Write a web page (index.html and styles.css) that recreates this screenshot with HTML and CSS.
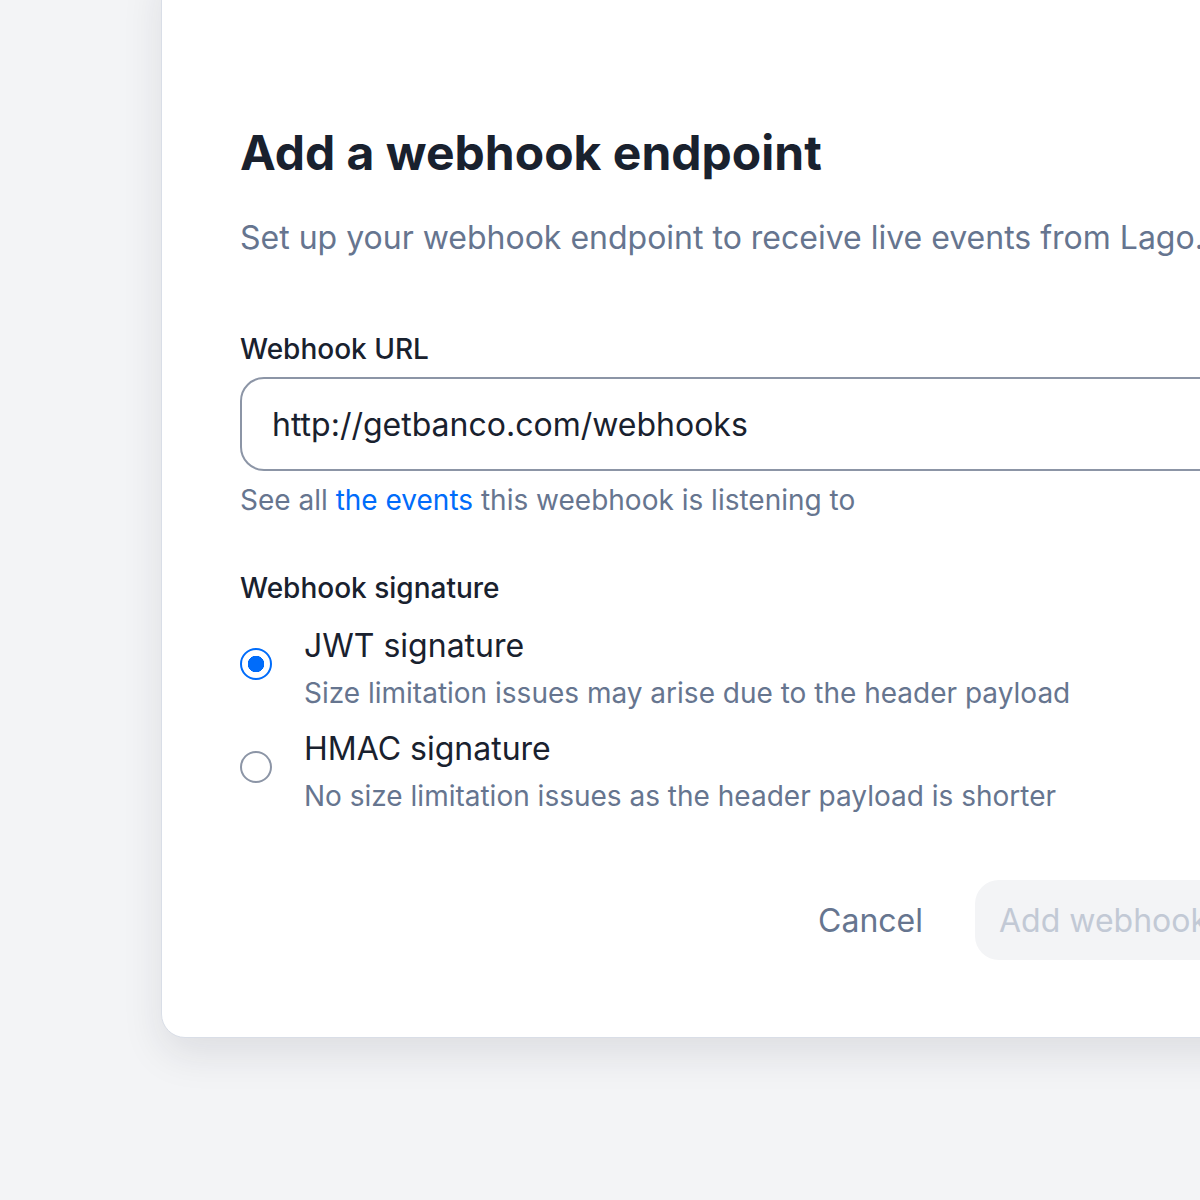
FILE: index.html
```html
<!DOCTYPE html>
<html>
  <head>
    <meta charset="utf-8" />
    <title>Add a webhook endpoint</title>

    <link rel="stylesheet" href="styles.css">
  </head>

  <body>
    <div class="dialog">
      <h1 class="dialog__title">Add a webhook endpoint</h1>
      <p class="dialog__desc">Set up your webhook endpoint to receive live events from Lago.</p>

      <div class="field">
        <label class="field__label" for="url">Webhook URL</label>
        <input class="field__input" type="text" id="url" value="http://getbanco.com/webhooks" />
        <p class="field__help">See all <a href="#" class="link">the events</a> this weebhook is listening to</p>
      </div>

      <div class="field field--radios">
        <span class="field__label">Webhook signature</span>

        <label class="radio">
          <span class="radio__dot radio__dot--checked"></span>
          <span class="radio__text">
            <span class="radio__label">JWT signature</span>
            <span class="radio__sub">Size limitation issues may arise due to the header payload</span>
          </span>
        </label>

        <label class="radio">
          <span class="radio__dot"></span>
          <span class="radio__text">
            <span class="radio__label">HMAC signature</span>
            <span class="radio__sub">No size limitation issues as the header payload is shorter</span>
          </span>
        </label>
      </div>

      <div class="actions">
        <button class="btn btn--quiet">Cancel</button>
        <button class="btn btn--disabled" disabled>Add webhook</button>
      </div>
    </div>
  </body>
</html>
```

FILE: styles.css
```css
:root {
  font-family: Inter, 'Noto Sans', sans-serif;
  color: #19212e;
}

body {
  margin: 0;
  background-color: #f3f4f6;
  overflow: hidden;
  height: 1200px;
}

.dialog {
  box-sizing: border-box;
  width: 1152px;
  margin: -40px 0 0 161px;
  padding: 162px 80px 77px 78px;

  background: #fff;
  border: 1px solid #d9dee7;
  border-radius: 24px;
  box-shadow: 0 16px 40px rgba(25, 33, 46, 0.1);
}

.dialog__title {
  margin: 0;
  font-size: 48px;
  line-height: 60px;
  font-weight: 700;
}

.dialog__desc {
  margin: 35px 0 0;
  font-size: 32px;
  line-height: 40px;
  color: #66758f;
  white-space: nowrap;
}

.field {
  display: flex;
  flex-direction: column;
  margin-top: 71px;
}

.field--radios {
  margin-top: 48px;
  gap: 16px;
}

.field__label {
  font-size: 28px;
  line-height: 40px;
  font-weight: 500;
}

.field__input {
  box-sizing: border-box;
  height: 94px;
  margin-top: 8px;
  padding: 0 30px;

  font-family: inherit;
  font-size: 32px;
  color: #19212e;

  border: 2px solid #8c95a6;
  border-radius: 24px;
  outline: none;
}

.field__help {
  margin: 9px 0 0;
  font-size: 28px;
  line-height: 40px;
  color: #66758f;
}

.link {
  color: #006cfa;
  text-decoration: none;
}

.radio {
  display: flex;
  gap: 32px;
  align-items: flex-start;
}

.radio:first-of-type {
  margin-top: 2px;
}

.radio__dot {
  box-sizing: border-box;
  flex: none;
  width: 32px;
  height: 32px;
  margin-top: 22px;
  border: 2px solid #8c95a6;
  border-radius: 50%;
}

.radio__dot--checked {
  border-color: #006cfa;
  background: radial-gradient(circle, #006cfa 0 8px, #fff 8.5px);
}

.radio__text {
  display: flex;
  flex-direction: column;
  gap: 7px;
}

.radio__label {
  font-size: 32px;
  line-height: 40px;
}

.radio__sub {
  font-size: 28px;
  line-height: 40px;
  color: #66758f;
  white-space: nowrap;
}

.actions {
  display: flex;
  justify-content: flex-end;
  gap: 28px;
  margin-top: 64px;
}

.btn {
  height: 80px;
  padding: 0 24px;

  font-family: inherit;
  font-size: 32px;
  border: none;
  border-radius: 24px;
  background: transparent;
}

.btn--quiet {
  color: #66758f;
}

.btn--disabled {
  background: #f3f4f6;
  color: #c2c9d5;
}
```
